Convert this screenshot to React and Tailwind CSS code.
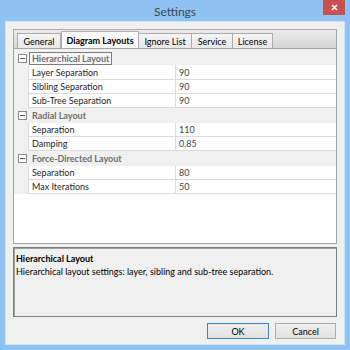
import React from 'react';

const categories = [
  {
    name: 'Hierarchical Layout',
    selected: true,
    props: [
      ['Layer Separation', '90'],
      ['Sibling Separation', '90'],
      ['Sub-Tree Separation', '90'],
    ],
  },
  {
    name: 'Radial Layout',
    props: [
      ['Separation', '110'],
      ['Damping', '0.85'],
    ],
  },
  {
    name: 'Force-Directed Layout',
    props: [
      ['Separation', '80'],
      ['Max Iterations', '50'],
    ],
  },
];

const tabs = [
  { label: 'General', w: 'w-[44px]' },
  { label: 'Diagram Layouts', w: 'w-[78px]', active: true },
  { label: 'Ignore List', w: 'w-[54px]' },
  { label: 'Service', w: 'w-[42px]' },
  { label: 'License', w: 'w-[41px]' },
];

const Collapse = () => (
  <div className="w-[9px] h-[9px] border border-[#8c8c8c] bg-white flex items-center justify-center">
    <div className="w-[5px] h-px bg-[#555]" />
  </div>
);

const CategoryRow = ({ name, selected }) => (
  <div className="h-[14.35px] flex items-center bg-[#f0f0f0]">
    <div className="w-[15px] flex justify-center pl-[2px]">
      <Collapse />
    </div>
    <div
      className={`h-[13px] flex items-center px-[2px] font-bold text-[#6f6f6f] ${
        selected ? 'border border-[#7c7c7c] bg-[#f7f7f7]' : 'border border-transparent'
      }`}
    >
      {name}
    </div>
  </div>
);

const PropRow = ({ name, value }) => (
  <div className="h-[14.35px] flex">
    <div className="w-[14px] bg-[#f0f0f0]" />
    <div className="w-[147px] bg-white border-b border-l border-[#dcdcdc] flex items-center pl-[3px] text-[#1e1e1e]">
      {name}
    </div>
    <div className="flex-1 bg-white border-b border-l border-[#dcdcdc] flex items-center pl-[3px] text-[#444]">
      {value}
    </div>
  </div>
);

export default function App() {
  return (
    <div className="w-[350px] h-[350px] bg-[#8ec3f1] flex flex-col font-['Lato',sans-serif] text-[9px] leading-none text-black">
      {/* Title bar */}
      <div className="h-[21px] relative flex items-center justify-center">
        <span className="text-[12px] text-[#3a4651] mt-[2px]">Settings</span>
        <div className="absolute right-[5px] top-0 w-[22px] h-[15px] bg-[#c75050] flex items-center justify-center">
          <svg width="7" height="7" viewBox="0 0 7 7">
            <path d="M1 1L6 6M6 1L1 6" stroke="white" strokeWidth="1.6" />
          </svg>
        </div>
      </div>

      {/* Window body */}
      <div className="mx-[5px] mb-[5px] flex-1 border border-[#cfe4f7] bg-[#f0f0f0] flex flex-col pt-[7px] pb-[5px] px-[7px]">
        {/* Tab strip */}
        <div className="h-[19px] border border-b-0 border-[#a9a9a9] bg-gradient-to-b from-[#ebebeb] to-[#d6d6d6] flex items-end pl-[3px]">
          {tabs.map((t) => (
            <div
              key={t.label}
              className={`${t.w} whitespace-nowrap flex items-center justify-center border border-b-0 border-[#acacac] ${
                t.active
                  ? 'h-[17px] bg-[#fbfbfb] font-bold'
                  : 'h-[15px] bg-gradient-to-b from-[#f5f5f5] to-[#e8e8e8] -ml-px first:ml-0'
              }`}
            >
              {t.label}
            </div>
          ))}
        </div>

        {/* Property grid */}
        <div className="h-[196px] border border-[#a5a5a5] bg-white flex flex-col">
          <div className="h-[2px] bg-[#f0f0f0]" />
          {categories.map((c) => (
            <React.Fragment key={c.name}>
              <CategoryRow name={c.name} selected={c.selected} />
              {c.props.map(([n, v], i) => (
                <PropRow key={c.name + i} name={n} value={v} />
              ))}
            </React.Fragment>
          ))}
        </div>

        <div className="h-[3px]" />

        {/* Description pane */}
        <div className="h-[70px] border border-[#7f7f7f] shadow-[inset_1px_1px_0_#a0a0a0] bg-[#f0f0f0] px-[2px] pt-[4px]">
          <div className="font-bold leading-[13px]">Hierarchical Layout</div>
          <div className="leading-[13px]">Hierarchical layout settings: layer, sibling and sub-tree separation.</div>
        </div>

        {/* Buttons */}
        <div className="mt-[6px] h-[16px] flex justify-end gap-[6px] pr-px">
          <button className="w-[62px] h-[16px] border border-[#3c84c4] bg-gradient-to-b from-[#eeeeee] to-[#e2e2e2] text-[9px] leading-none">
            OK
          </button>
          <button className="w-[61px] h-[16px] border border-[#adadad] bg-gradient-to-b from-[#eeeeee] to-[#e2e2e2] text-[9px] leading-none">
            Cancel
          </button>
        </div>
      </div>
    </div>
  );
}
